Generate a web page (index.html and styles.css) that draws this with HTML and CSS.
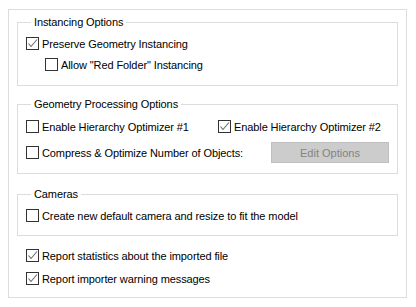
FILE: index.html
```html
<!DOCTYPE html>
<html lang="en">
<head>
    <meta charset="UTF-8">
    <title>Import Options</title>
    <link rel="stylesheet" href="styles.css">
</head>
<body>
    <div class="panel">
        <!-- Instancing -->
        <fieldset class="group group-instancing">
            <legend>Instancing Options</legend>
            <label class="row">
                <span class="box checked"><svg viewBox="0 0 11 11"><polyline points="1.5,5.5 4,8.5 10,1.5"/></svg></span>
                Preserve Geometry Instancing
            </label>
            <label class="row indent">
                <span class="box"></span>
                Allow "Red Folder" Instancing
            </label>
        </fieldset>

        <!-- Geometry processing -->
        <fieldset class="group group-geometry">
            <legend>Geometry Processing Options</legend>
            <div class="row two-col">
                <label class="item"><span class="box"></span>Enable Hierarchy Optimizer #1</label>
                <label class="item"><span class="box checked"><svg viewBox="0 0 11 11"><polyline points="1.5,5.5 4,8.5 10,1.5"/></svg></span>Enable Hierarchy Optimizer #2</label>
            </div>
            <div class="row button-row">
                <label class="item"><span class="box"></span>Compress &amp; Optimize Number of Objects:</label>
                <button class="btn" disabled>Edit Options</button>
            </div>
        </fieldset>

        <!-- Cameras -->
        <fieldset class="group group-cameras">
            <legend>Cameras</legend>
            <label class="row">
                <span class="box"></span>
                Create new default camera and resize to fit the model
            </label>
        </fieldset>

        <div class="reports">
            <label class="row">
                <span class="box checked"><svg viewBox="0 0 11 11"><polyline points="1.5,5.5 4,8.5 10,1.5"/></svg></span>
                Report statistics about the imported file
            </label>
            <label class="row">
                <span class="box checked"><svg viewBox="0 0 11 11"><polyline points="1.5,5.5 4,8.5 10,1.5"/></svg></span>
                Report importer warning messages
            </label>
        </div>
    </div>
</body>
</html>
```

FILE: styles.css
```css
/* General */
body {
    margin: 0;
    padding: 9px 0 0 8px;
    background: #ffffff;
    font-family: "Liberation Sans", Arial, sans-serif;
    font-size: 11px;
    letter-spacing: -0.1px;
    color: #000000;
}

.panel {
    width: 399px;
    height: 289px;
    box-sizing: border-box;
    border: 1px solid #dcdcdc;
    padding: 5px 8px 0 8px;
}

/* Group boxes */
.group {
    margin: 0;
    padding: 0 8px;
    border: 1px solid #dcdcdc;
    min-width: 0;
}

.group legend {
    margin-left: 5px;
    padding: 0 3px;
    line-height: 14px;
}

.group-instancing {
    padding-top: 4px;
    padding-bottom: 10px;
}

.group-geometry {
    margin-top: 11px;
    padding-top: 5px;
    padding-bottom: 10px;
}

.group-cameras {
    margin-top: 13px;
    padding-top: 4px;
    padding-bottom: 9px;
}

/* Rows */
.row {
    display: flex;
    align-items: center;
    height: 21px;
}

.row.indent {
    padding-left: 19px;
}

.two-col {
    display: grid;
    grid-template-columns: 192px 1fr;
    align-items: center;
}

.button-row {
    justify-content: space-between;
    margin-top: 5px;
}

.item {
    display: flex;
    align-items: center;
}

/* Checkbox */
.box {
    width: 13px;
    height: 13px;
    box-sizing: border-box;
    border: 1px solid #333333;
    background: #ffffff;
    margin-right: 3px;
    flex-shrink: 0;
    display: flex;
    align-items: center;
    justify-content: center;
}

.box svg {
    width: 11px;
    height: 11px;
    display: block;
}

.box polyline {
    fill: none;
    stroke: #6a6a6a;
    stroke-width: 1.1;
}

/* Button */
.btn {
    width: 118px;
    height: 21px;
    margin: 0;
    padding: 0;
    background: #cccccc;
    border: 1px solid #bfbfbf;
    font-family: inherit;
    font-size: 11px;
    color: #838383;
}

/* Bottom checkboxes */
.reports {
    padding: 8px 0 0 9px;
}

.reports .row {
    height: 23px;
}
```
